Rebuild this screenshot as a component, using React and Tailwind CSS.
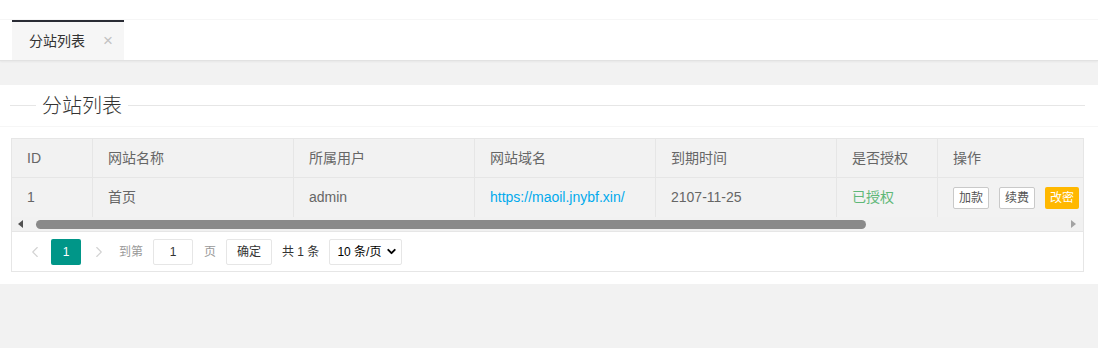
import { ChevronLeft, ChevronRight, ChevronDown } from "lucide-react";

const font = { fontFamily: '"Liberation Sans", "Noto Sans CJK SC", sans-serif' };

const cot = [
  { ten: "ID", rong: "w-[81px]" },
  { ten: "网站名称", rong: "w-[201px]" },
  { ten: "所属用户", rong: "w-[181px]" },
  { ten: "网站域名", rong: "w-[181px]" },
  { ten: "到期时间", rong: "w-[181px]" },
  { ten: "是否授权", rong: "w-[101px]" },
  { ten: "操作", rong: "w-[420px]" },
];

function NutNho({ children, cam }) {
  return (
    <span
      className={
        cam
          ? "inline-flex h-[22px] items-center rounded-[2px] bg-[#FFB800] px-[5px] text-[12px] text-white"
          : "inline-flex h-[22px] items-center rounded-[2px] border border-[#c9c9c9] bg-white px-[5px] text-[12px] text-[#555]"
      }
    >
      {children}
    </span>
  );
}

export default function App() {
  return (
    <div className="h-[348px] w-[1098px] overflow-hidden bg-[#f2f2f2]" style={font}>
      <div className="h-[20px] border-b border-[#f6f6f6] bg-white" />
      <div className="flex h-[41px] border-b border-[#e2e2e2] bg-white pl-[12px] shadow-[0_1px_2px_rgba(0,0,0,0.05)]">
        <div className="flex h-[40px] w-[112px] items-center border-t-2 border-[#292B34] bg-[#f6f6f6] pl-[17px] text-[14px] text-[#333]">
          <span>分站列表</span>
          <span className="ml-[18px] text-[17px] font-light text-[#c2c2c2]">×</span>
        </div>
      </div>
      <div className="h-[24px]" />
      <div className="bg-white">
        <div className="flex h-[42px] items-center border-b border-[#f6f6f6]">
          <div className="ml-[10px] h-px w-[26px] bg-[#e6e6e6]" />
          <span className="px-[6px] text-[20px] font-light text-[#333]">分站列表</span>
          <div className="mr-[13px] h-px flex-1 bg-[#e6e6e6]" />
        </div>
        <div className="pb-[12px] pl-[11px] pr-[14px] pt-[11px]">
          <div className="border border-[#e6e6e6]">
            <div className="overflow-hidden">
              <div className="w-[1347px] text-[14px] text-[#666]">
                <div className="flex h-[39px] border-b border-[#e6e6e6] bg-[#f2f2f2]">
                  {cot.map((c, i) => (
                    <div
                      key={c.ten}
                      className={`${c.rong} flex items-center px-[15px] ${i < cot.length - 1 ? "border-r border-[#e6e6e6]" : ""}`}
                    >
                      {c.ten}
                    </div>
                  ))}
                </div>
                <div className="flex h-[39px] bg-[#f2f2f2]">
                  <div className="flex w-[81px] items-center border-r border-[#e6e6e6] px-[15px]">1</div>
                  <div className="flex w-[201px] items-center border-r border-[#e6e6e6] px-[15px]">首页</div>
                  <div className="flex w-[181px] items-center border-r border-[#e6e6e6] px-[15px]">admin</div>
                  <div className="flex w-[181px] items-center border-r border-[#e6e6e6] px-[15px] text-[#01AAED]">
                    https://maoil.jnybf.xin/
                  </div>
                  <div className="flex w-[181px] items-center border-r border-[#e6e6e6] px-[15px]">2107-11-25</div>
                  <div className="flex w-[101px] items-center border-r border-[#e6e6e6] px-[15px] text-[#5FB878]">已授权</div>
                  <div className="flex w-[420px] items-center gap-[10px] px-[15px]">
                    <NutNho>加款</NutNho>
                    <NutNho>续费</NutNho>
                    <NutNho cam>改密</NutNho>
                  </div>
                </div>
              </div>
            </div>
            <div className="flex h-[15px] items-center border-b border-[#e6e6e6] bg-[#f1f1f1]">
              <span className="ml-[6px] h-0 w-0 border-y-[4px] border-r-[5px] border-y-transparent border-r-[#505050]" />
              <div className="ml-[13px] flex-1">
                <div className="h-[9px] w-[830px] rounded-full bg-[#8a8a8a]" />
              </div>
              <span className="mr-[7px] h-0 w-0 border-y-[4px] border-l-[5px] border-y-transparent border-l-[#a3a3a3]" />
            </div>
            <div className="flex h-[39px] items-center pl-[10px] text-[12px] text-[#333]">
              <ChevronLeft className="ml-[4px] h-[18px] w-[18px] text-[#d2d2d2]" strokeWidth={1.5} />
              <span className="ml-[7px] flex h-[26px] w-[30px] items-center justify-center rounded-[2px] bg-[#009688] text-white">
                1
              </span>
              <ChevronRight className="ml-[9px] h-[18px] w-[18px] text-[#d2d2d2]" strokeWidth={1.5} />
              <span className="ml-[11px] text-[#999]">到第</span>
              <span className="ml-[10px] flex h-[26px] w-[40px] items-center justify-center rounded-[2px] border border-[#e6e6e6]">
                1
              </span>
              <span className="ml-[11px] text-[#999]">页</span>
              <span className="ml-[10px] flex h-[26px] w-[46px] items-center justify-center rounded-[2px] border border-[#e6e6e6] text-[#333]">
                确定
              </span>
              <span className="ml-[10px]">共 1 条</span>
              <span className="ml-[10px] flex h-[26px] w-[73px] items-center gap-[4px] rounded-[2px] border border-[#e6e6e6] pl-[7px] text-[#000]">
                10 条/页
                <ChevronDown className="h-[13px] w-[13px]" strokeWidth={3.5} />
              </span>
            </div>
          </div>
        </div>
      </div>
    </div>
  );
}
